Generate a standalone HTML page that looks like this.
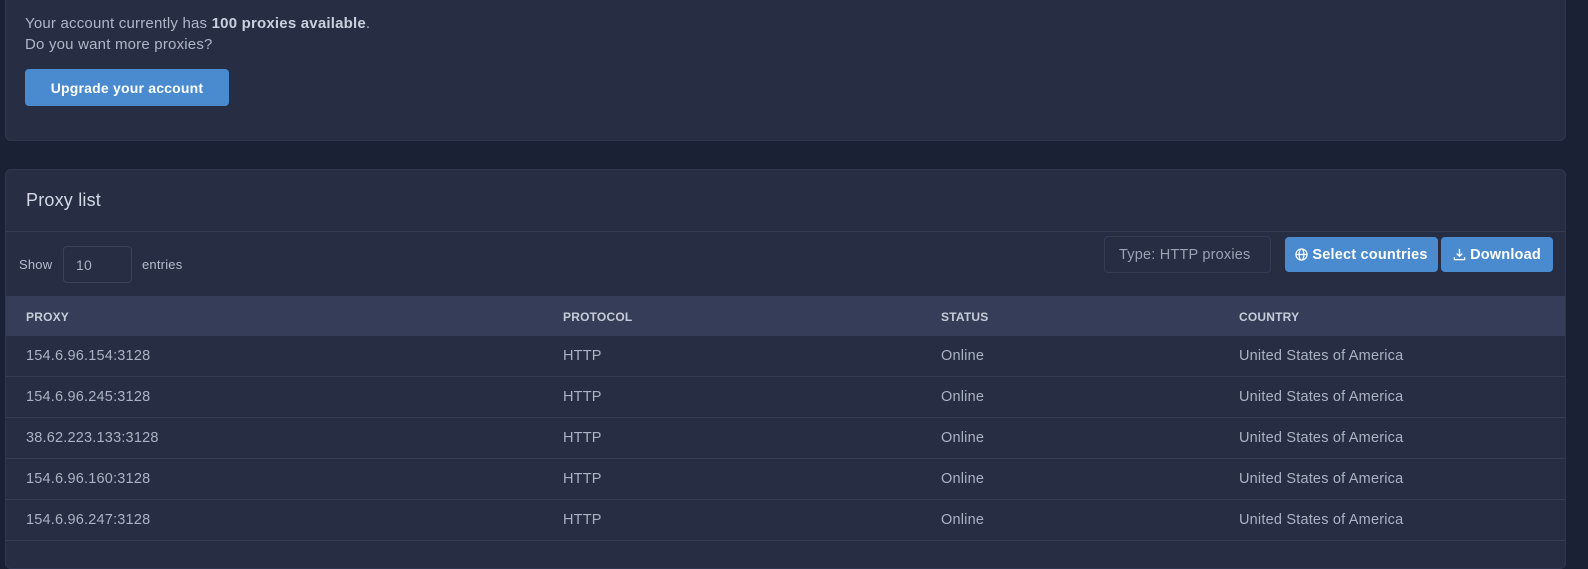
<!DOCTYPE html><html><head><style>
body{margin:0;width:1588px;height:553px;overflow:hidden;background:#1b2134;font-family:"Liberation Sans",sans-serif;color:#b4bccc;position:relative;letter-spacing:0.2px}
.c1{position:absolute;left:5px;top:-8px;width:1561px;height:149px;background:#272e44;border-radius:6px;border:1px solid #2f3650;box-sizing:border-box}
.c2{position:absolute;left:5px;top:169px;width:1561px;height:400px;background:#272e44;border-radius:6px;border:1px solid #2f3650;box-sizing:border-box;overflow:hidden}
.t{position:absolute;font-size:15px;color:#aeb6c8}
.btn{position:absolute;background:#4a8bd0;color:#fff;border-radius:4px;font-weight:bold;font-size:14px;display:flex;align-items:center;justify-content:center}
.row{position:absolute;left:0;width:1561px;height:41px;border-bottom:1px solid #353d55;box-sizing:border-box;font-size:14.5px;color:#aab2c4}
.row span{position:absolute;top:12px}
</style></head><body>
<div class="c1"></div>
<div class="t" style="left:25px;top:15px">Your account currently has <b style="color:#c9d0dc">100 proxies available</b>.</div>
<div class="t" style="left:25px;top:36px">Do you want more proxies?</div>
<div class="btn" style="left:25px;top:69px;width:204px;height:37px">Upgrade your account</div>
<div class="c2">
<div style="position:absolute;left:20px;top:20px;font-size:18px;color:#d2d8e4">Proxy list</div>
<div style="position:absolute;left:0;top:61px;width:100%;border-top:1px solid #353d55"></div>
<div style="position:absolute;left:13px;top:87px;font-size:13px;color:#b4bccc">Show</div>
<div style="position:absolute;left:57px;top:76px;width:69px;height:37px;border:1px solid #3a4259;border-radius:4px;box-sizing:border-box;font-size:14px;padding:10px 12px;color:#aab2c4">10</div>
<div style="position:absolute;left:136px;top:87px;font-size:13px;color:#b4bccc">entries</div>
<div style="position:absolute;left:1098px;top:66px;width:167px;height:37px;border:1px solid #353d55;border-radius:4px;box-sizing:border-box;font-size:14.5px;padding:10px 14px;color:#9aa2b4">Type: HTTP proxies</div>
<div class="btn" style="left:1279px;top:67px;width:153px;height:35px;font-size:14.5px"><svg width="13" height="13" viewBox="0 0 14 14" style="margin-right:4px" fill="none" stroke="#fff" stroke-width="1.3"><circle cx="7" cy="7" r="6"/><ellipse cx="7" cy="7" rx="2.6" ry="6"/><path d="M1 7h12"/></svg>Select countries</div>
<div class="btn" style="left:1435px;top:67px;width:112px;height:35px;font-size:14.5px"><svg width="13" height="13" viewBox="0 0 14 14" style="margin-right:4px" fill="none" stroke="#fff" stroke-width="1.4"><path d="M7 1v8M4 6l3 3 3-3M1.5 10v2.5h11V10"/></svg>Download</div>
<div style="position:absolute;left:0;top:126px;width:100%;height:40px;background:#353d58;font-size:12px;font-weight:bold;color:#c6cdd9">
<span style="position:absolute;left:20px;top:14px">PROXY</span><span style="position:absolute;left:557px;top:14px">PROTOCOL</span><span style="position:absolute;left:935px;top:14px">STATUS</span><span style="position:absolute;left:1233px;top:14px">COUNTRY</span></div>
<div class="row" style="top:166px"><span style="left:20px">154.6.96.154:3128</span><span style="left:557px">HTTP</span><span style="left:935px">Online</span><span style="left:1233px">United States of America</span></div>
<div class="row" style="top:207px"><span style="left:20px">154.6.96.245:3128</span><span style="left:557px">HTTP</span><span style="left:935px">Online</span><span style="left:1233px">United States of America</span></div>
<div class="row" style="top:248px"><span style="left:20px">38.62.223.133:3128</span><span style="left:557px">HTTP</span><span style="left:935px">Online</span><span style="left:1233px">United States of America</span></div>
<div class="row" style="top:289px"><span style="left:20px">154.6.96.160:3128</span><span style="left:557px">HTTP</span><span style="left:935px">Online</span><span style="left:1233px">United States of America</span></div>
<div class="row" style="top:330px"><span style="left:20px">154.6.96.247:3128</span><span style="left:557px">HTTP</span><span style="left:935px">Online</span><span style="left:1233px">United States of America</span></div>
</div>
</body></html>
